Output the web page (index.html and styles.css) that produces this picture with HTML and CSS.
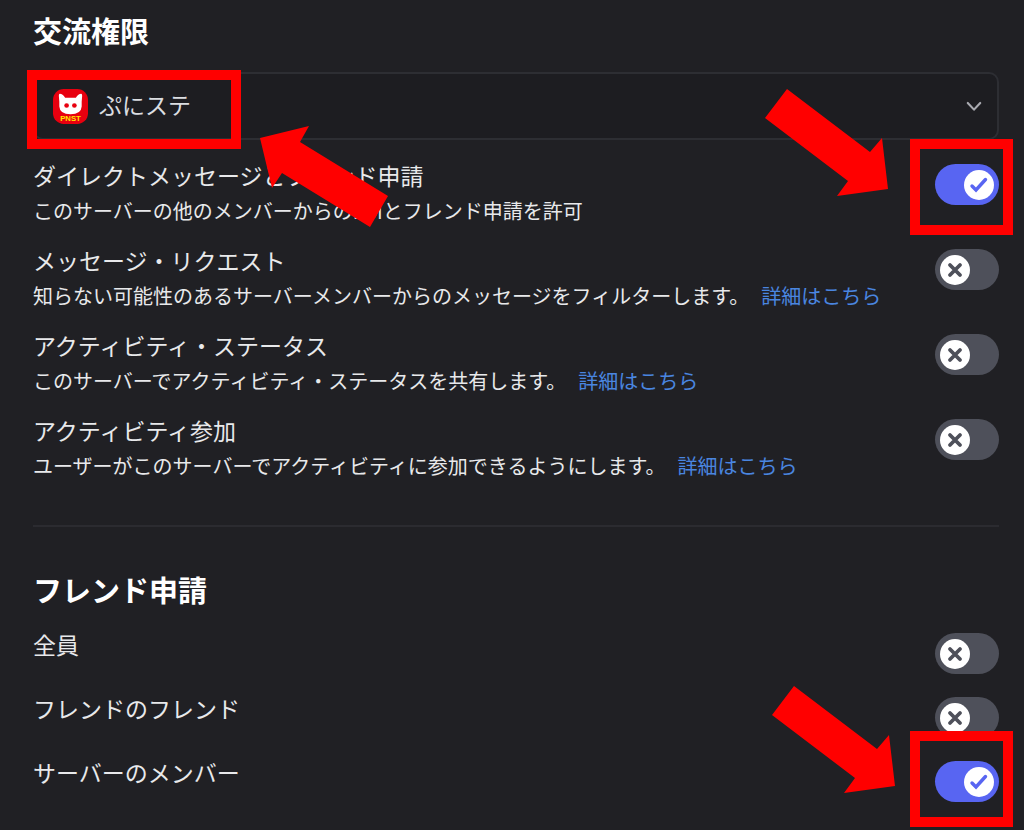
FILE: index.html
```html
<!DOCTYPE html>
<html lang="ja">
<head>
    <meta charset="UTF-8">
    <meta name="viewport" content="width=device-width, initial-scale=1.0">
    <title>交流権限</title>
    <link rel="stylesheet" href="styles.css">
</head>
<body>

    <!-- shared shapes -->
    <svg class="defs" aria-hidden="true">
        <symbol id="mark-on" viewBox="0 0 30 30">
            <circle cx="15" cy="15" r="15" fill="#fff"/>
            <path d="M8 16L12 20L21.500 9.500" fill="none" stroke="#5865f2" stroke-width="3.400" stroke-linecap="round"/>
        </symbol>
        <symbol id="mark-off" viewBox="0 0 30 30">
            <circle cx="15" cy="15" r="15" fill="#fff"/>
            <path d="M10 10L20 20M20 10L10 20" fill="none" stroke="#4e505a" stroke-width="3.800" stroke-linecap="round"/>
        </symbol>
        <symbol id="arrow-down" viewBox="0 0 123 107">
            <path d="M22 0L105 63L117 49L123 100L72 107L83 92L0 29Z" fill="#f00"/>
        </symbol>
    </svg>

    <main class="settings">
        <section class="permissions">
            <h2>交流権限</h2>
            <div class="server">
                <svg class="server-icon" viewBox="0 0 36 36" aria-hidden="true">
                    <rect width="36" height="36" rx="11" fill="#e8000f"/>
                    <path d="M7 5Q6 5 6 7L6.500 13V18Q7 26 18 26Q29 26 29.500 18V13L30 7Q30 5 29 5Q26 5 23.500 9H12.500Q10 5 7 5Z" fill="#fff"/>
                    <circle cx="14" cy="17" r="2.400" fill="#e8000f"/>
                    <circle cx="22" cy="17" r="2.400" fill="#e8000f"/>
                    <text class="server-tag" x="18" y="33" text-anchor="middle">PNST</text>
                </svg>
                <select class="server-select" aria-label="サーバー">
                    <option>ぷにステ</option>
                </select>
                <svg class="chevron" viewBox="0 0 18 12" aria-hidden="true">
                    <path d="M2 2L9 9.500L16 2" fill="none" stroke="#a9aab0" stroke-width="2.400" stroke-linecap="round" stroke-linejoin="round"/>
                </svg>
                <span class="frame frame-server"></span>
                <svg class="arrow arrow-server" viewBox="0 0 128 101" aria-hidden="true">
                    <path d="M0 12L49 0L40 16L128 70L110 101L22 47L12 62Z" fill="#f00"/>
                </svg>
            </div>

            <div class="row">
                <div class="text">
                    <label for="dm">ダイレクトメッセージとフレンド申請</label>
                    <p>このサーバーの他のメンバーからのDMとフレンド申請を許可</p>
                </div>
                <div class="switch">
                    <input type="checkbox" id="dm" checked>
                    <svg class="on" aria-hidden="true"><use href="#mark-on"/></svg>
                    <svg class="off" aria-hidden="true"><use href="#mark-off"/></svg>
                    <span class="frame frame-dm"></span>
                    <svg class="arrow arrow-dm" aria-hidden="true"><use href="#arrow-down"/></svg>
                </div>
            </div>
            <div class="row">
                <div class="text">
                    <label for="request">メッセージ・リクエスト</label>
                    <p>知らない可能性のあるサーバーメンバーからのメッセージをフィルターします。<a href="#">詳細はこちら</a></p>
                </div>
                <div class="switch">
                    <input type="checkbox" id="request">
                    <svg class="on" aria-hidden="true"><use href="#mark-on"/></svg>
                    <svg class="off" aria-hidden="true"><use href="#mark-off"/></svg>
                </div>
            </div>
            <div class="row">
                <div class="text">
                    <label for="status">アクティビティ・ステータス</label>
                    <p>このサーバーでアクティビティ・ステータスを共有します。<a href="#">詳細はこちら</a></p>
                </div>
                <div class="switch">
                    <input type="checkbox" id="status">
                    <svg class="on" aria-hidden="true"><use href="#mark-on"/></svg>
                    <svg class="off" aria-hidden="true"><use href="#mark-off"/></svg>
                </div>
            </div>
            <div class="row">
                <div class="text">
                    <label for="join">アクティビティ参加</label>
                    <p>ユーザーがこのサーバーでアクティビティに参加できるようにします。<a href="#">詳細はこちら</a></p>
                </div>
                <div class="switch">
                    <input type="checkbox" id="join">
                    <svg class="on" aria-hidden="true"><use href="#mark-on"/></svg>
                    <svg class="off" aria-hidden="true"><use href="#mark-off"/></svg>
                </div>
            </div>
        </section>

        <hr>

        <section class="friends">
            <h2>フレンド申請</h2>
            <div class="row">
                <div class="text"><label for="everyone">全員</label></div>
                <div class="switch">
                    <input type="checkbox" id="everyone">
                    <svg class="on" aria-hidden="true"><use href="#mark-on"/></svg>
                    <svg class="off" aria-hidden="true"><use href="#mark-off"/></svg>
                </div>
            </div>
            <div class="row">
                <div class="text"><label for="mutual">フレンドのフレンド</label></div>
                <div class="switch">
                    <input type="checkbox" id="mutual">
                    <svg class="on" aria-hidden="true"><use href="#mark-on"/></svg>
                    <svg class="off" aria-hidden="true"><use href="#mark-off"/></svg>
                </div>
            </div>
            <div class="row">
                <div class="text"><label for="members">サーバーのメンバー</label></div>
                <div class="switch">
                    <input type="checkbox" id="members" checked>
                    <svg class="on" aria-hidden="true"><use href="#mark-on"/></svg>
                    <svg class="off" aria-hidden="true"><use href="#mark-off"/></svg>
                    <span class="frame frame-members"></span>
                    <svg class="arrow arrow-members" aria-hidden="true"><use href="#arrow-down"/></svg>
                </div>
            </div>
        </section>
    </main>

</body>
</html>
```

FILE: styles.css
```css
* {
    box-sizing: border-box;
}
body {
    margin: 0;
    background-color: #202024;
    color: #e8e9eb;
    font-family: "Noto Sans CJK JP", sans-serif;
}
.defs {
    display: none;
}
.settings {
    padding: 10px 25px 10px 33px;
}
h2 {
    margin: 0 0 22px;
    color: #fff;
    font-size: 29px;
    font-weight: 700;
    line-height: 40px;
}
hr {
    height: 2px;
    margin: 42px 0;
    border: none;
    background-color: #2b2b30;
}

/* server drop-down */
.server {
    position: relative;
    display: grid;
    grid-template-columns: 20px 35px 1fr 16px 17px;
    align-items: center;
    margin-bottom: 18px;
}
.server-select {
    grid-area: 1 / 1 / 2 / -1;
    height: 68px;
    padding: 0 48px 4px 64px;
    border: 2px solid #2d2e33;
    border-radius: 10px;
    appearance: none;
    background-color: #1d1d21;
    color: #dbdee1;
    font-family: inherit;
    font-size: 23px;
}
.server-icon {
    grid-area: 1 / 2;
    z-index: 1;
    width: 35px;
    height: 35px;
    pointer-events: none;
}
.server-tag {
    fill: #ffe600;
    font-family: "Liberation Sans", sans-serif;
    font-size: 8px;
    font-weight: 700;
}
.chevron {
    grid-area: 1 / 4;
    z-index: 1;
    width: 16px;
    height: 11px;
    pointer-events: none;
}

/* setting rows */
.row {
    display: flex;
    justify-content: space-between;
    align-items: flex-start;
    margin-bottom: 15px;
}
.text label {
    display: block;
    font-size: 23px;
    line-height: 35px;
}
.text p {
    margin: 0;
    font-size: 20px;
    line-height: 35px;
}
.text a {
    margin-left: 12px;
    color: #4a86e0;
    text-decoration: none;
}
.friends h2 {
    margin-bottom: 18px;
}
.friends .row {
    margin-bottom: 17px;
}

/* toggle switch */
.switch {
    position: relative;
    display: grid;
    flex: none;
    align-items: center;
    margin-top: 6px;
}
.switch input {
    grid-area: 1 / 1;
    width: 64px;
    height: 41px;
    margin: 0;
    border-radius: 21px;
    appearance: none;
    background-color: #4e505a;
    cursor: pointer;
}
.switch input:checked {
    background-color: #5865f2;
}
.on,
.off {
    grid-area: 1 / 1;
    width: 30px;
    height: 30px;
    margin: 0 5px;
    pointer-events: none;
}
.on {
    display: none;
    justify-self: end;
}
.switch input:checked ~ .on {
    display: block;
}
.switch input:checked ~ .off {
    display: none;
}

/* red highlights */
.frame,
.arrow {
    position: absolute;
    z-index: 2;
    pointer-events: none;
}
.frame {
    border: 10px solid #f00;
}
.frame-server {
    top: -2px;
    left: -6px;
    width: 214px;
    height: 79px;
}
.frame-dm {
    inset: -25px -14px -30px -25px;
}
.frame-members {
    inset: -30px -14px -25px -25px;
}
.arrow-server {
    top: 54px;
    left: 227px;
    width: 128px;
    height: 101px;
}
.arrow-dm,
.arrow-members {
    top: -75px;
    width: 123px;
    height: 107px;
}
.arrow-dm {
    right: 111px;
}
.arrow-members {
    right: 104px;
}
```
